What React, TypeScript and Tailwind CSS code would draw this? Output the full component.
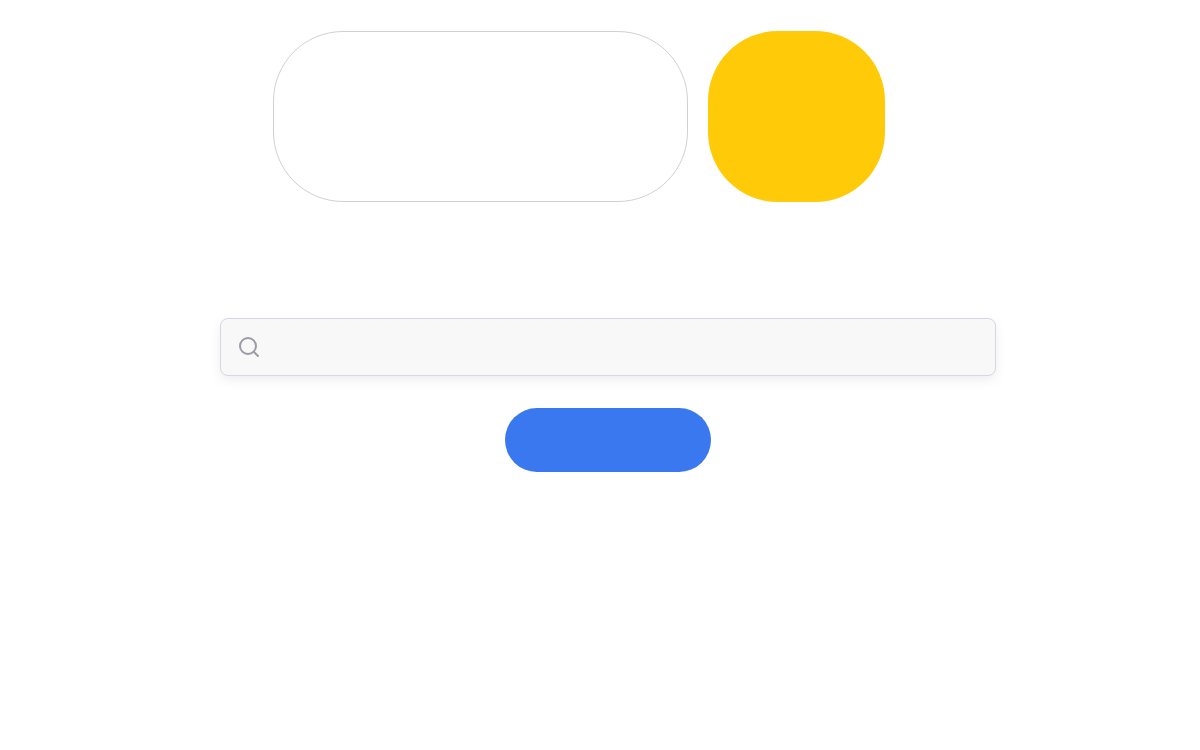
import { Search } from "lucide-react";

export default function App() {
  return (
    <div className="min-h-[750px] bg-white pt-[31px] pl-[220px]">
      <div className="flex w-[776px] flex-col items-center">
        <div className="flex gap-5 self-start pl-[53px]">
          <div className="h-[171px] w-[415px] rounded-[70px] border border-[#d1d1d1] bg-white" />
          <div className="h-[171px] w-[177px] rounded-[70px] bg-[#ffca08]" />
        </div>
        <div className="mt-[116px] flex h-[58px] w-[776px] items-center rounded-lg border border-[#d8d6e4] bg-[#f8f8f8] pl-4 shadow-[0_4px_12px_rgba(0,0,0,0.07)]">
          <Search size={24} strokeWidth={2} className="text-[#9c9ca6]" />
        </div>
        <div className="mt-8 h-16 w-[206px] rounded-full bg-[#3a78f0]" />
      </div>
    </div>
  );
}
